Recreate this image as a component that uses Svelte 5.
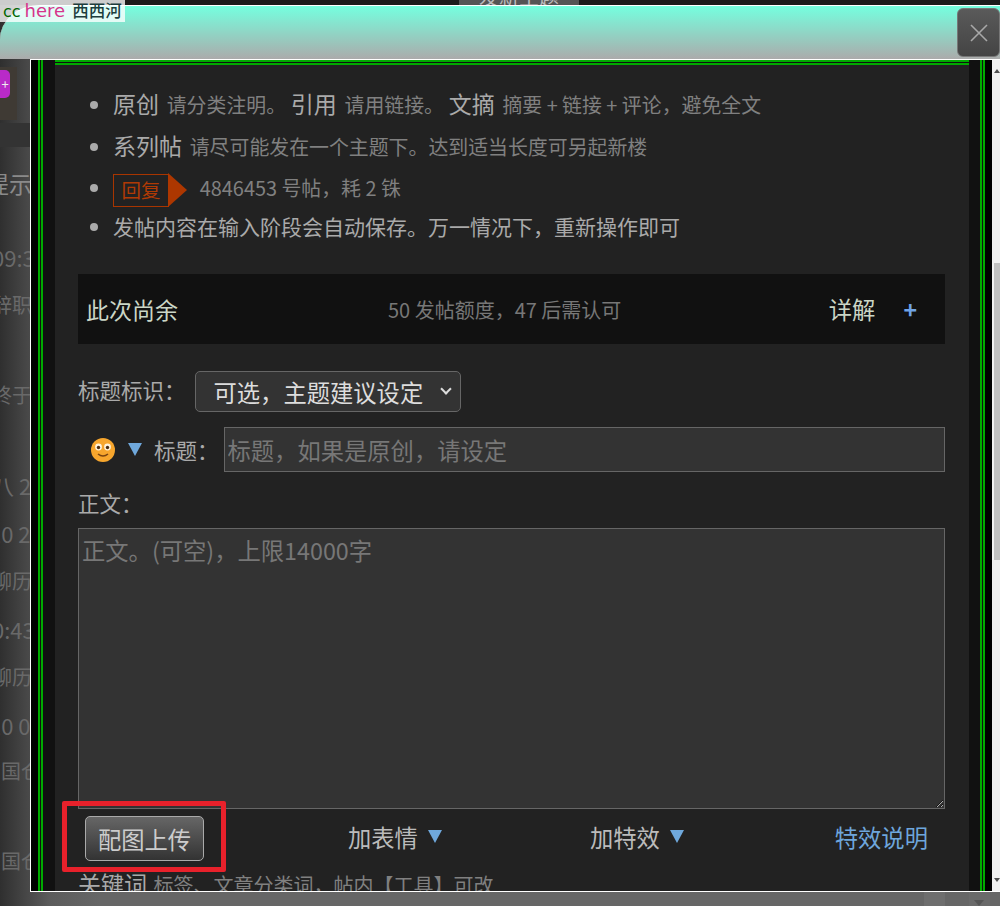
<script>
  const rows = [
    { text: "09:3", cls: "num" },
    { text: "辞职", cls: "tall" },
    { text: "终于", cls: "tall" },
    { text: "八 20", cls: "num" },
    { text: "10 2", cls: "num back" },
    { text: "聊历", cls: "" },
    { text: "0:43", cls: "num" },
    { text: "聊历", cls: "" },
    { text: "10 0", cls: "num short back" },
    { text: "国仓", cls: "tall in" },
    { text: "国仓", cls: "in" }
  ];
</script>

<div class="page">
  <div class="behind">
    <div class="topstrip"><span class="newpost">发新主题</span></div>
    <div class="userbox"><span class="plus">+</span></div>
    <div class="band"></div>
    <div class="hint">提示</div>
    <div class="list">
      {#each rows as row}
        <div class="row {row.cls}">{row.text}</div>
      {/each}
    </div>
    <div class="pager">
      <span class="pg a"></span>
      <span class="pg b"></span>
      <span class="pg c"><i></i></span>
    </div>
  </div>

  <div class="dialog">
    <div class="head">
      <button type="button" class="close" aria-label="关闭">
        <svg width="20" height="20" viewBox="0 0 20 20"><path d="M2 2 L18 18 M18 2 L2 18" stroke="#a8a8a8" stroke-width="1.6" fill="none" /></svg>
      </button>
    </div>
    <div class="body">
      <div class="frame">
        <div class="content">
          <ul class="notes">
            <li><b>原创</b> <small>请分类注明。</small> <b>引用</b> <small>请用链接。</small> <b>文摘</b> <small>摘要 + 链接 + 评论，避免全文</small></li>
            <li><b>系列帖</b> <small>请尽可能发在一个主题下。达到适当长度可另起新楼</small></li>
            <li class="reply">
              <span class="tag">回复</span>
              <small>4846453 号帖，耗 2 铢</small>
            </li>
            <li>发帖内容在输入阶段会自动保存。万一情况下，重新操作即可</li>
          </ul>

          <div class="quota">
            <span class="q-left">此次尚余</span>
            <span class="q-mid">50 发帖额度，47 后需认可</span>
            <span class="q-right">详解</span>
            <span class="q-plus">+</span>
          </div>

          <div class="line-tag">
            <label for="tag">标题标识：</label>
            <div class="sel">
              <select id="tag">
                <option>可选，主题建议设定</option>
              </select>
              <span class="chev"></span>
            </div>
          </div>

          <div class="line-title">
            <svg class="smile" width="24" height="24" viewBox="0 0 24 24">
              <circle cx="12" cy="12" r="12" fill="#f7a62d" />
              <circle cx="7.5" cy="9" r="3.4" fill="#fff3dc" />
              <circle cx="16.5" cy="9" r="3.4" fill="#fff3dc" />
              <circle cx="7.5" cy="9.5" r="1.7" fill="#4a2c10" />
              <circle cx="16.5" cy="9.5" r="1.7" fill="#4a2c10" />
              <path d="M7 16 Q12 20 17 16" stroke="#7a4410" stroke-width="1.6" fill="none" />
            </svg>
            <span class="tri"></span>
            <label for="title">标题：</label>
            <input id="title" placeholder="标题，如果是原创，请设定" />
          </div>

          <div class="body-label">正文：</div>
          <textarea placeholder="正文。(可空)，上限14000字"></textarea>

          <div class="tools">
            <button type="button" class="upload">配图上传</button>
            <span class="tool one">加表情<span class="tri"></span></span>
            <span class="tool two">加特效<span class="tri"></span></span>
            <span class="link">特效说明</span>
          </div>
          <div class="keywords"><b>关键词</b> <small>标签、文章分类词，帖内【工具】可改</small></div>
          <div class="redbox"></div>
        </div>
      </div>
      <div class="scroll">
        <span class="arrow up-a"></span>
        <span class="thumb"></span>
        <span class="arrow down-a"></span>
      </div>
    </div>
  </div>

  <div class="brand"><span class="cc">cc</span><span class="here">here</span><span class="xxh">西西河</span></div>
</div>

<style>
  :global(body) { margin: 0; background: #222; }
  .page {
    position: relative;
    width: 1000px;
    height: 906px;
    overflow: hidden;
    font-family: "Noto Sans CJK SC", "Liberation Sans", sans-serif;
    background: linear-gradient(90deg, #2f2f2f, #5c5c5c 50px, #666 100px);
  }

  .behind { position: absolute; inset: 0; color: #7d7d7d; }
  .topstrip { height: 5px; background: #1c1c1c; overflow: hidden; display: flex; justify-content: center; }
  .newpost {
    margin-left: 38px;
    width: 120px;
    height: 30px;
    background: #555;
    color: #bbb;
    font-size: 20px;
    line-height: 20px;
    text-align: center;
    margin-top: -13px;
  }
  .userbox {
    position: absolute;
    top: 67px;
    left: 0;
    width: 17px;
    height: 53px;
    background: #3f3a34;
  }
  .plus {
    display: block;
    width: 10px;
    height: 28px;
    margin-top: 3px;
    background: #b92ac8;
    border-radius: 0 5px 5px 0;
    color: #eee;
    font-size: 13px;
    line-height: 28px;
    text-align: center;
  }
  .band { position: absolute; top: 123px; left: 0; width: 30px; height: 24px; background: #333; }
  .hint { position: absolute; top: 168px; left: -14px; font-size: 23px; line-height: 30px; color: #8a8a8a; }
  .list { position: absolute; top: 233px; left: -8px; width: 38px; overflow: hidden; }
  .row { height: 48px; line-height: 48px; font-size: 20px; white-space: nowrap; color: #696969; }
  .row.num { font-size: 22px; }
  .row.back { margin-left: -3px; }
  .row.tall { height: 90px; }
  .row.short { height: 46px; }
  .row.in { padding-left: 9px; }
  .pager { position: absolute; left: 924px; bottom: 0; height: 14px; display: flex; }
  .pg { display: block; height: 14px; }
  .pg.a { width: 21px; background: #6e6e6e; }
  .pg.b { width: 24px; background: #666; }
  .pg.c { width: 21px; background: #6a6a6a; position: relative; }
  .pg.c i {
    position: absolute;
    left: 5px;
    top: 8px;
    border: 5px solid transparent;
    border-top: 6px solid #555;
  }

  .dialog { position: relative; padding-top: 5px; }
  .head {
    position: relative;
    height: 53px;
    border-top: 1px solid #fff;
    border-top-left-radius: 40px 34px;
    background: linear-gradient(#75ffdf, #ababab);
  }
  .close {
    position: absolute;
    top: 2px;
    right: 0;
    width: 43px;
    height: 49px;
    padding: 0;
    border: 1px solid #777;
    border-radius: 6px;
    background: linear-gradient(#5a5a5a, #444);
    display: flex;
    align-items: center;
    justify-content: center;
  }
  .body {
    margin-left: 30px;
    height: 831px;
    display: flex;
    border: 1px solid #fff;
    border-right: 0;
    background: #000;
    overflow: hidden;
  }
  .frame {
    flex: none;
    width: 947px;
    height: 831px;
    box-sizing: border-box;
    overflow: hidden;
    margin: 0 7px;
    padding: 0 11px 0 12px;
    border-left: 5px double #0a0;
    border-right: 5px double #0a0;
    background: #111;
  }
  .content {
    position: relative;
    box-sizing: border-box;
    width: 914px;
    min-height: 831px;
    padding: 0 24px 0 23px;
    border-top: 5px double #0a0;
    background: #222;
    background-clip: padding-box;
  }

  .notes {
    margin: 0;
    padding: 17px 0 0 35px;
    font-size: 21px;
    color: #aaa;
    list-style: disc;
  }
  .notes li { height: 42px; line-height: 42px; white-space: nowrap; }
  .notes li.reply { height: 39px; }
  .notes li:last-child { height: 38px; }
  .notes b { font-weight: 400; font-size: 23px; color: #aaa; }
  .notes small { font-size: 19.9px; color: #808080; }
  .notes b + small { margin-left: 3px; }
  .tag {
    position: relative;
    display: inline-block;
    box-sizing: border-box;
    width: 56px;
    height: 33px;
    margin-right: 26px;
    border: 1px solid #a83500;
    color: #b03a05;
    font-size: 19.5px;
    line-height: 30px;
    text-align: center;
    vertical-align: middle;
  }
  .tag::after {
    content: "";
    position: absolute;
    left: 54px;
    top: -2px;
    border: 17.5px solid transparent;
    border-left: 19px solid #ad3700;
    border-right: 0;
  }

  .quota {
    display: flex;
    align-items: center;
    height: 70px;
    margin-top: 31px;
    padding: 0 28px 0 8px;
    background: #111;
  }
  .q-left { width: 302px; font-size: 23px; color: #cbd6c6; }
  .q-mid { flex: 1; font-size: 20px; color: #777; }
  .q-right { font-size: 23.3px; color: #cbd6c6; margin-right: 28px; }
  .q-plus { font-size: 23px; font-weight: 700; color: #6fa3e6; line-height: 1; }

  .line-tag { display: flex; align-items: center; gap: 9px; margin-top: 27px; font-size: 21.5px; color: #aaa; }
  .line-tag label { padding-bottom: 5px; }
  .sel { position: relative; width: 266px; height: 41px; }
  select {
    appearance: none;
    box-sizing: border-box;
    width: 266px;
    height: 41px;
    padding: 0 0 0 18px;
    border: 1px solid #666;
    border-radius: 5px;
    background: #333;
    color: #ddd;
    font: inherit;
    font-size: 23.3px;
    outline: none;
  }
  .chev {
    position: absolute;
    right: 11px;
    top: 14px;
    width: 6px;
    height: 6px;
    border-right: 2px solid #ddd;
    border-bottom: 2px solid #ddd;
    transform: rotate(45deg);
    pointer-events: none;
  }
  .line-title {
    display: flex;
    align-items: center;
    margin-top: 15px;
    padding-left: 13px;
    font-size: 21.5px;
    color: #aaa;
  }
  .tri {
    display: inline-block;
    width: 0;
    height: 0;
    border: 7.5px solid transparent;
    border-top: 13px solid #6fa8dc;
    border-bottom: 0;
  }
  .line-title .tri { margin: 0 12px 0 13px; }
  input {
    flex: 1;
    box-sizing: border-box;
    height: 45px;
    margin-left: 5px;
    padding: 0 3px;
    border: 1px solid #666;
    background: #333;
    color: #ddd;
    font: inherit;
    font-size: 23.3px;
    outline: none;
  }
  input::placeholder, textarea::placeholder { color: #777; opacity: 1; }
  .body-label { margin-top: 15px; font-size: 21.5px; line-height: 32px; color: #aaa; }
  textarea {
    display: block;
    box-sizing: border-box;
    width: 100%;
    height: 281px;
    margin-top: 9px;
    padding: 4px 3px;
    border: 1px solid #666;
    background: #333;
    color: #ddd;
    font: inherit;
    font-size: 23.3px;
    outline: none;
    color-scheme: dark;
  }
  .tools { display: flex; align-items: center; height: 45px; margin-top: 7px; padding-left: 7px; font-size: 23.3px; }
  .upload {
    box-sizing: border-box;
    width: 119px;
    height: 45px;
    padding: 0;
    border: 1px solid #aaa;
    border-radius: 5px;
    background: linear-gradient(#666, #333);
    color: #ccc;
    font: inherit;
  }
  .tool { color: #bbb; white-space: nowrap; padding-bottom: 4px; }
  .tool .tri { margin-left: 10px; vertical-align: 4px; }
  .tool.one { margin-left: 144px; }
  .tool.two { margin-left: 148px; }
  .link { margin-left: 151px; padding-bottom: 4px; color: #6ea6dc; }
  .keywords { margin-top: 6px; white-space: nowrap; line-height: 32px; }
  .keywords b { font-weight: 400; font-size: 23px; color: #aaa; }
  .keywords small { margin-left: 3px; font-size: 20px; color: #808080; }
  .redbox {
    position: absolute;
    left: 7px;
    top: 736px;
    width: 154px;
    height: 61px;
    border: 5px solid #e8212b;
    border-radius: 2px;
  }

  .scroll { position: relative; flex: 1; background: #f1f1f1; }
  .thumb { position: absolute; top: 203px; left: 2px; right: 0; height: 297px; background: #c1c1c1; }
  .arrow { position: absolute; left: 2px; border: 3px solid transparent; }
  .up-a { top: 9px; border-bottom: 4px solid #505050; border-top: 0; }
  .down-a { bottom: 9px; border-top: 4px solid #505050; border-bottom: 0; }

  .brand {
    position: absolute;
    top: 0;
    left: 0;
    width: 122px;
    height: 22px;
    padding-left: 3px;
    background: rgba(255, 255, 255, 0.78);
    font-family: "DejaVu Sans", sans-serif;
    font-size: 18px;
    line-height: 20px;
    white-space: nowrap;
  }
  .cc { color: #060; font-size: 16px; }
  .here { margin-left: 4px; color: #d6348c; }
  .xxh { margin-left: 7px; color: #1c3d3d; font-family: "Noto Sans CJK SC", sans-serif; font-size: 16.5px; font-weight: 500; }
</style>
